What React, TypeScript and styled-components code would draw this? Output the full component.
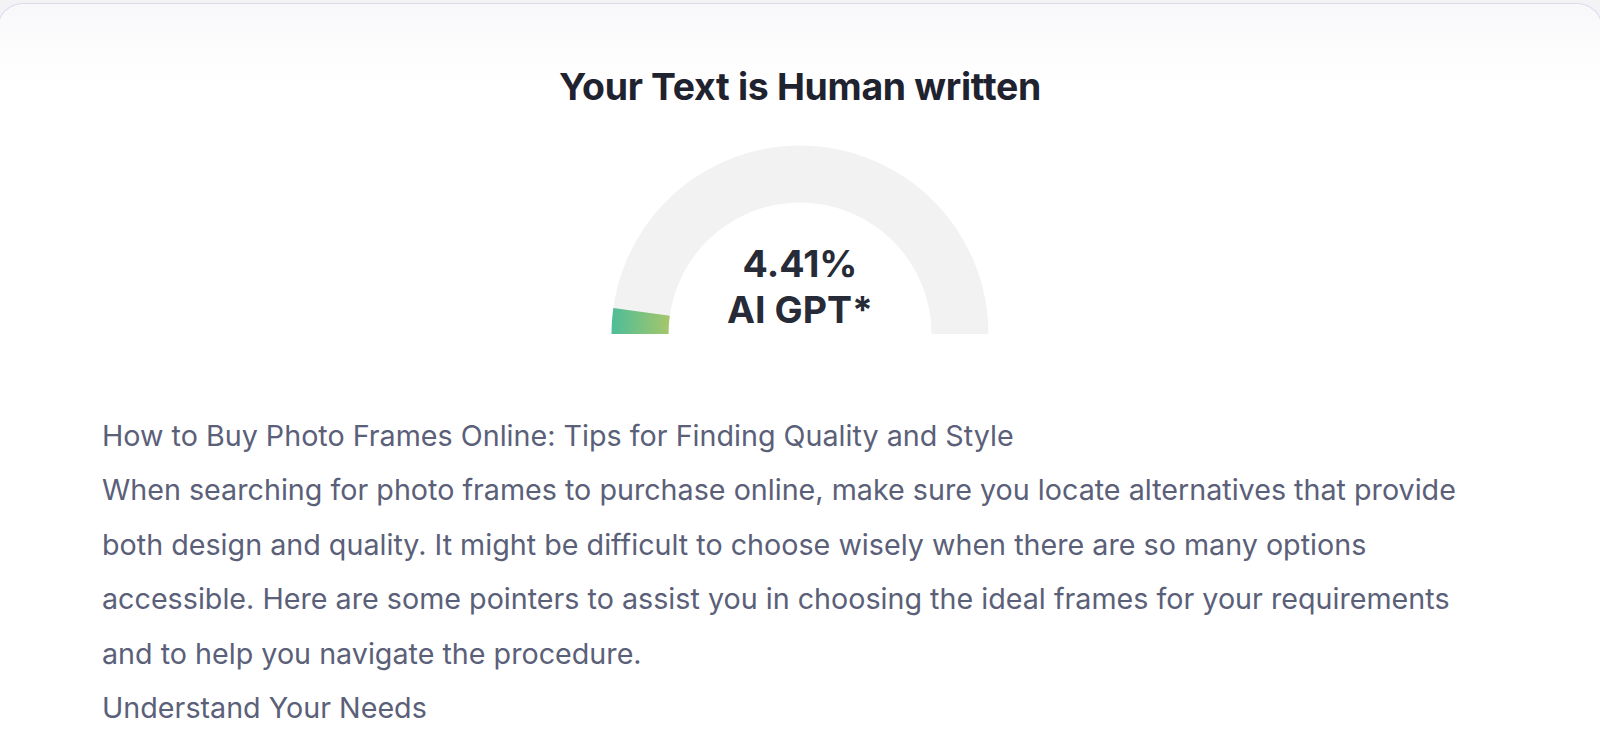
import styled, { createGlobalStyle } from 'styled-components';

const GlobalStyle = createGlobalStyle`
  html, body {
    margin: 0;
    padding: 0;
    background: #f3f3f6;
    font-family: Inter, "Noto Sans", "Liberation Sans", sans-serif;
  }
`;

const Page = styled.div`
  padding-top: 3px;
  height: 745px;
  overflow: hidden;
`;

const Card = styled.div`
  margin: 0 -3px;
  border: 1px solid #dcdcee;
  border-bottom: none;
  border-radius: 26px 26px 0 0;
  background: linear-gradient(#f8f8fa 0, #ffffff 80px);
  height: 760px;
  display: flex;
  flex-direction: column;
  align-items: center;
`;

const Title = styled.h1`
  margin: 60px 0 0;
  font-size: 37.4px;
  font-weight: 700;
  color: #1f222f;
  letter-spacing: -0.3px;
  line-height: 45px;
`;

const GaugeWrap = styled.div`
  position: relative;
  margin-top: 36px;
  width: 378px;
  height: 190px;
`;

const GaugeLabel = styled.div`
  position: absolute;
  left: 0;
  right: 0;
  top: 96px;
  text-align: center;
  font-size: 37.5px;
  font-weight: 700;
  line-height: 46px;
  color: #272a37;
`;

const Body = styled.div`
  align-self: stretch;
  padding: 74px 118px 0 104px;
  font-size: 28.7px;
  line-height: 54.4px;
  color: #5b6079;
`;

const Line = styled.p`
  margin: 0;
`;

const Gauge = ({ value }: { value: number }) => {
  const cx = 189;
  const cy = 189;
  const ro = 188.5;
  const ri = 131.5;
  const a = Math.PI - (value / 100) * Math.PI;
  const ox = cx + ro * Math.cos(a);
  const oy = cy - ro * Math.sin(a);
  const ix = cx + ri * Math.cos(a);
  const iy = cy - ri * Math.sin(a);
  const track = `M ${cx - ro} ${cy} A ${ro} ${ro} 0 0 1 ${cx + ro} ${cy} L ${cx + ri} ${cy} A ${ri} ${ri} 0 0 0 ${cx - ri} ${cy} Z`;
  const fill = `M ${cx - ro} ${cy} A ${ro} ${ro} 0 0 1 ${ox} ${oy} L ${ix} ${iy} A ${ri} ${ri} 0 0 0 ${cx - ri} ${cy} Z`;
  return (
    <GaugeWrap>
      <svg width="378" height="190" viewBox="0 0 378 190">
        <defs>
          <linearGradient id="g" x1="0" y1="0" x2="1" y2="0">
            <stop offset="0" stopColor="#4dbd99" />
            <stop offset="1" stopColor="#a6c66a" />
          </linearGradient>
        </defs>
        <path d={track} fill="#f2f2f2" />
        <path d={fill} fill="url(#g)" />
      </svg>
      <GaugeLabel>
        {value}%<br />AI GPT*
      </GaugeLabel>
    </GaugeWrap>
  );
};

const App = () => {
  return (
    <>
      <GlobalStyle />
      <Page>
        <Card>
          <Title>Your Text is Human written</Title>
          <Gauge value={4.41} />
          <Body>
            <Line>How to Buy Photo Frames Online: Tips for Finding Quality and Style</Line>
            <Line>
              When searching for photo frames to purchase online, make sure you locate alternatives that provide
              both design and quality. It might be difficult to choose wisely when there are so many options
              accessible. Here are some pointers to assist you in choosing the ideal frames for your requirements
              and to help you navigate the procedure.
            </Line>
            <Line>Understand Your Needs</Line>
          </Body>
        </Card>
      </Page>
    </>
  );
};

export default App;
